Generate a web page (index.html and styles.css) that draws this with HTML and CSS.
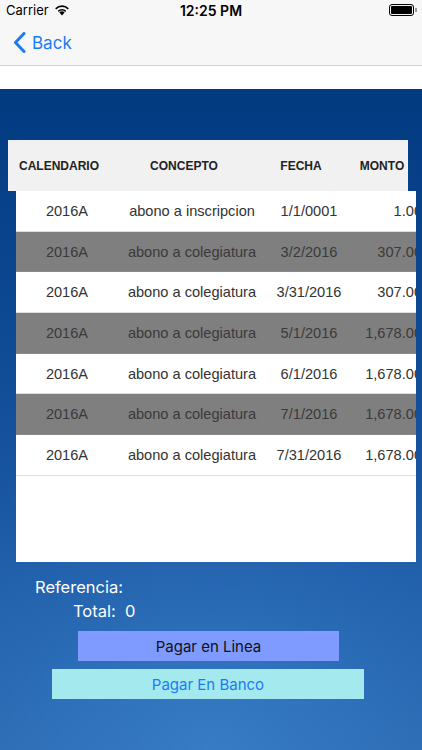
FILE: index.html
```html
<!DOCTYPE html>
<html>
<head>
    <link rel="stylesheet" href="styles.css">
</head>
<body>
    <div class="status-bar">
        <div class="carrier">
            Carrier
            <svg class="wifi" width="16" height="12" viewBox="0 0 14 10">
                <path d="M7 9.8 L4.7 7.2 A3.2 3.2 0 0 1 9.3 7.2 Z" fill="#000"/>
                <path d="M3.3 5.7 A5.2 5.2 0 0 1 10.7 5.7 L9.8 6.7 A3.8 3.8 0 0 0 4.2 6.7 Z" fill="#000"/>
                <path d="M1 3.4 A8.4 8.4 0 0 1 13 3.4 L12 4.5 A6.9 6.9 0 0 0 2 4.5 Z" fill="#000"/>
            </svg>
        </div>
        <div class="time">12:25 PM</div>
        <div class="battery">
            <span class="battery-body"><span class="battery-level"></span></span>
            <span class="battery-tip"></span>
        </div>
    </div>

    <div class="nav-bar">
        <a class="back">
            <svg width="13" height="21" viewBox="0 0 13 21">
                <path d="M11 1.5 L2.5 10.5 L11 19.5" fill="none" stroke="#1a7cf5" stroke-width="3" stroke-linecap="round" stroke-linejoin="round"/>
            </svg>
            <span>Back</span>
        </a>
    </div>

    <div class="gap-strip"></div>

    <div class="main">
        <div class="table-head">
            <div class="col c1">CALENDARIO</div>
            <div class="col c2">CONCEPTO</div>
            <div class="col c3">FECHA</div>
            <div class="col c4">MONTO</div>
        </div>

        <div class="table-body">
            <div class="row">
                <div class="col c1">2016A</div>
                <div class="col c2">abono a inscripcion</div>
                <div class="col c3">1/1/0001</div>
                <div class="col c4">1.00</div>
            </div>
            <div class="row dark">
                <div class="col c1">2016A</div>
                <div class="col c2">abono a colegiatura</div>
                <div class="col c3">3/2/2016</div>
                <div class="col c4">307.00</div>
            </div>
            <div class="row">
                <div class="col c1">2016A</div>
                <div class="col c2">abono a colegiatura</div>
                <div class="col c3">3/31/2016</div>
                <div class="col c4">307.00</div>
            </div>
            <div class="row dark">
                <div class="col c1">2016A</div>
                <div class="col c2">abono a colegiatura</div>
                <div class="col c3">5/1/2016</div>
                <div class="col c4">1,678.00</div>
            </div>
            <div class="row">
                <div class="col c1">2016A</div>
                <div class="col c2">abono a colegiatura</div>
                <div class="col c3">6/1/2016</div>
                <div class="col c4">1,678.00</div>
            </div>
            <div class="row dark">
                <div class="col c1">2016A</div>
                <div class="col c2">abono a colegiatura</div>
                <div class="col c3">7/1/2016</div>
                <div class="col c4">1,678.00</div>
            </div>
            <div class="row">
                <div class="col c1">2016A</div>
                <div class="col c2">abono a colegiatura</div>
                <div class="col c3">7/31/2016</div>
                <div class="col c4">1,678.00</div>
            </div>
        </div>

        <div class="summary">
            <div class="ref">Referencia:</div>
            <div class="total">Total:&nbsp; 0</div>
        </div>

        <button class="btn btn-online">Pagar en Linea</button>
        <button class="btn btn-bank">Pagar En Banco</button>
    </div>
</body>
</html>
```

FILE: styles.css
```css
body {
    margin: 0;
    width: 422px;
    height: 750px;
    overflow: hidden;
    font-family: Inter, "Liberation Sans", sans-serif;
    background: #fff;
}

/* status bar + nav */
.status-bar {
    height: 20px;
    background: #f7f7f7;
    display: flex;
    align-items: center;
    justify-content: space-between;
    padding: 0 6px;
    font-size: 13px;
    color: #000;
}

.carrier {
    display: flex;
    align-items: center;
    gap: 5px;
    width: 120px;
}

.time {
    font-weight: 600;
    font-size: 14px;
}

.battery {
    width: 120px;
    display: flex;
    justify-content: flex-end;
    align-items: center;
}

.battery-body {
    display: block;
    width: 21px;
    height: 8px;
    border: 1px solid #000;
    border-radius: 3px;
    padding: 1px;
}

.battery-level {
    display: block;
    height: 100%;
    background: #000;
    border-radius: 1px;
}

.battery-tip {
    display: block;
    width: 1.5px;
    height: 4px;
    background: #999;
    margin-left: 1px;
    margin-right: -1px;
}

.nav-bar {
    height: 45px;
    background: #f7f7f7;
    border-bottom: 1px solid #cfcfcf;
    display: flex;
    align-items: center;
    padding-left: 13px;
}

.back {
    display: flex;
    align-items: center;
    gap: 6px;
    color: #1a7cf5;
    font-size: 17px;
}

.gap-strip {
    height: 23px;
    background: #fff;
}

/* blue area */
.main {
    height: 661px;
    padding-top: 51px;
    box-sizing: border-box;
    background:
        radial-gradient(ellipse 85% 50% at 50% 100%, rgba(66, 140, 215, 0.55) 0%, rgba(60, 135, 210, 0.2) 60%, rgba(60, 135, 210, 0) 100%),
        linear-gradient(#023a80 0%, #0c4791 32%, #1d5aa6 71%, #2a68b0 100%);
}

.table-head {
    margin-left: 8px;
    width: 400px;
    height: 51px;
    background: #f1f1f1;
    display: flex;
    align-items: center;
    font-family: "Liberation Sans", Arial, sans-serif;
    font-weight: bold;
    font-size: 12px;
    color: #222;
}

.table-body {
    margin-left: 16px;
    width: 400px;
    height: 371px;
    background: #fff;
    overflow: hidden;
    font-family: "Liberation Sans", Arial, sans-serif;
    font-size: 14.6px;
    color: #333;
}

.row {
    width: 420px;
    height: 39.7px;
    display: flex;
    align-items: center;
    border-bottom: 1px solid #dedede;
}

.row.dark {
    background: #7f7f7f;
    color: #3a3a3a;
    border-bottom-color: #8a8a8a;
}

.col {
    flex-shrink: 0;
    text-align: center;
    white-space: nowrap;
}

.c1 { width: 102px; }
.c2 { width: 148px; }
.c3 { width: 86px; }
.c4 { width: 76px; }

.row .c4 {
    width: 70px;
    text-align: right;
}

.summary {
    color: #fff;
    font-size: 16.5px;
    line-height: 20px;
    padding-top: 15px;
}

.ref {
    padding-left: 35px;
}

.total {
    padding-left: 73px;
    margin-top: 4px;
}

.btn {
    display: block;
    border: none;
    height: 30px;
    font-family: Inter, "Liberation Sans", sans-serif;
    font-size: 15px;
    padding: 0;
}

.btn-online {
    margin: 10px 0 0 78px;
    width: 261px;
    background: #7f9bff;
    color: #111;
}

.btn-bank {
    margin: 8px 0 0 52px;
    width: 312px;
    background: #a4e9ee;
    color: #1a7cf5;
}
```
